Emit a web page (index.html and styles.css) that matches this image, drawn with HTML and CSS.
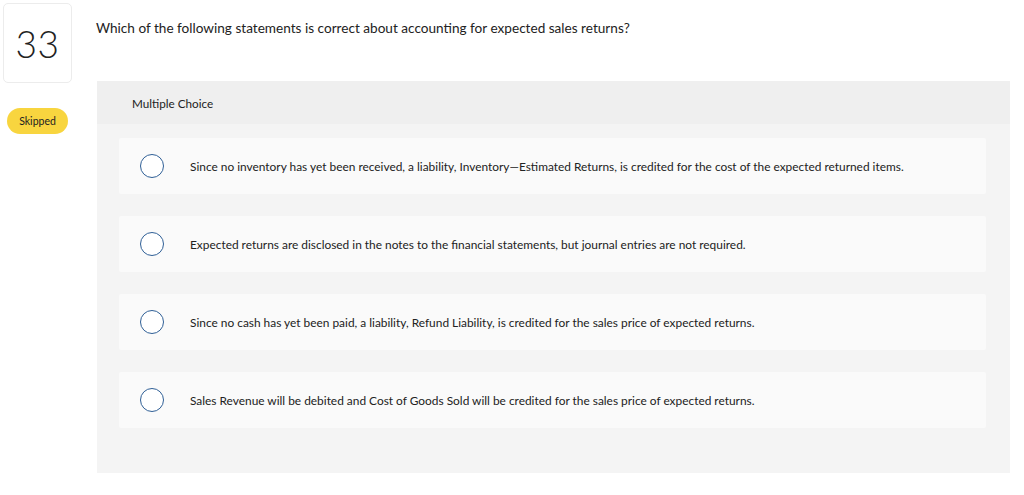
FILE: index.html
```html
<!DOCTYPE html>
<html>
<head>
<meta charset="utf-8">
<link rel="stylesheet" href="styles.css">
</head>
<body>
<div class="page">
  <aside class="side">
    <div class="qnum">33</div>
    <div class="badge">Skipped</div>
  </aside>
  <main class="main">
    <p class="question">Which of the following statements is correct about accounting for expected sales returns?</p>
    <section class="panel">
      <div class="panel-head">Multiple Choice</div>
      <div class="options">
        <div class="option"><span class="radio"></span><span class="opt-text">Since no inventory has yet been received, a liability, Inventory—Estimated Returns, is credited for the cost of the expected returned items.</span></div>
        <div class="option"><span class="radio"></span><span class="opt-text">Expected returns are disclosed in the notes to the financial statements, but journal entries are not required.</span></div>
        <div class="option"><span class="radio"></span><span class="opt-text">Since no cash has yet been paid, a liability, Refund Liability, is credited for the sales price of expected returns.</span></div>
        <div class="option"><span class="radio"></span><span class="opt-text">Sales Revenue will be debited and Cost of Goods Sold will be credited for the sales price of expected returns.</span></div>
      </div>
    </section>
  </main>
</div>
</body>
</html>
```
FILE: styles.css
```css
html, body {
  margin: 0;
  padding: 0;
  background: #ffffff;
}
body {
  font-family: Lato, "Open Sans", sans-serif;
  color: #222;
}
.page {
  display: flex;
  align-items: flex-start;
}
.side {
  width: 97px;
  flex: none;
  display: flex;
  flex-direction: column;
  padding: 3px 0 0 3px;
  box-sizing: border-box;
}
.qnum {
  width: 69px;
  height: 80px;
  box-sizing: border-box;
  border: 1px solid #ececec;
  border-radius: 5px;
  display: flex;
  align-items: center;
  justify-content: center;
  font-size: 37px;
  font-weight: 300;
  color: #222;
  letter-spacing: 0.5px;
}
.badge {
  margin: 25px 0 0 4px;
  width: 61px;
  height: 26px;
  border-radius: 13px;
  background: #f8d53f;
  display: flex;
  align-items: center;
  justify-content: center;
  font-size: 10.5px;
  color: #222;
}
.main {
  flex: 1;
  padding-right: 14px;
}
.question {
  margin: 19px 0 0 -1px;
  font-size: 13.6px;
  line-height: 18px;
  color: #222;
}
.panel {
  margin-top: 44px;
  background: #f4f4f4;
  height: 392px;
}
.panel-head {
  height: 43px;
  background: #efefef;
  display: flex;
  align-items: center;
  padding-left: 35px;
  font-size: 11.7px;
  color: #222;
}
.options {
  display: flex;
  flex-direction: column;
  gap: 22px;
  padding: 14px 24px 0 22px;
}
.option {
  height: 56px;
  background: #fafafa;
  border-radius: 2px;
  display: flex;
  align-items: center;
  padding-left: 21px;
}
.radio {
  width: 24px;
  height: 24px;
  box-sizing: border-box;
  border: 1.2px solid #2f5f96;
  border-radius: 50%;
  background: #fff;
  flex: none;
}
.opt-text {
  margin-left: 26px;
  font-size: 11.9px;
  color: #222;
}
```
